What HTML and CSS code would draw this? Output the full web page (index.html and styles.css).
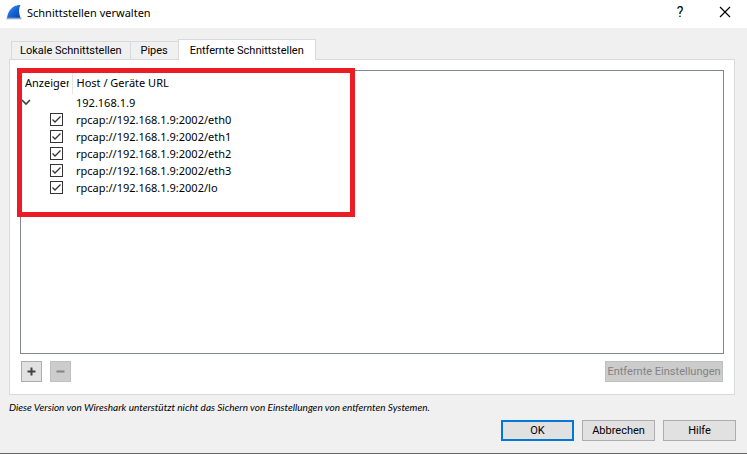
FILE: index.html
```html
<!DOCTYPE html>
<html lang="de">
<head>
  <meta charset="UTF-8">
  <title>Schnittstellen verwalten</title>
  <link rel="stylesheet" href="styles.css">
</head>
<body>
  <div class="dialog">
    <header class="titlebar">
      <svg class="logo" width="16" height="16" viewBox="0 0 16 16" aria-hidden="true">
        <defs>
          <linearGradient id="fin" x1="0" y1="0" x2="1" y2="1">
            <stop offset="0" stop-color="#5a9cf0"/>
            <stop offset="0.5" stop-color="#1766d8"/>
            <stop offset="1" stop-color="#0b3fa8"/>
          </linearGradient>
        </defs>
        <path d="M1 14C2 7 6 1 14.5 1C12.6 4 12.6 9 14.5 14Z" fill="url(#fin)"/>
        <path d="M0.5 14.5H15.5" stroke="#8fa9cf" stroke-width="1.6"/>
      </svg>
      <h1 class="title">Schnittstellen verwalten</h1>
      <button class="title-btn" type="button">?</button>
      <button class="title-btn" type="button" aria-label="Schließen">
        <svg width="12" height="12" viewBox="0 0 12 12"><path d="M1 1L11 11M11 1L1 11" stroke="#000" stroke-width="1.2"/></svg>
      </button>
    </header>

    <main class="content">
      <div class="tabs" role="tablist">
        <button class="tab" role="tab" type="button">Lokale Schnittstellen</button>
        <button class="tab" role="tab" type="button">Pipes</button>
        <button class="tab active" role="tab" type="button" aria-selected="true">Entfernte Schnittstellen</button>
      </div>

      <section class="panel">
        <div class="tree">
          <table class="interfaces">
            <thead>
              <tr><th class="show-col">Anzeigen</th><th>Host / Geräte URL</th></tr>
            </thead>
            <tbody>
              <tr>
                <td class="expand">
                  <button class="expand-btn" type="button" aria-label="Zuklappen">
                    <svg width="10" height="7" viewBox="0 0 10 7"><path d="M1 1L5 5L9 1" fill="none" stroke="#444" stroke-width="1.7"/></svg>
                  </button>
                </td>
                <td>192.168.1.9</td>
              </tr>
              <tr><td class="check"><input type="checkbox" id="eth0" checked></td><td><label for="eth0">rpcap://192.168.1.9:2002/eth0</label></td></tr>
              <tr><td class="check"><input type="checkbox" id="eth1" checked></td><td><label for="eth1">rpcap://192.168.1.9:2002/eth1</label></td></tr>
              <tr><td class="check"><input type="checkbox" id="eth2" checked></td><td><label for="eth2">rpcap://192.168.1.9:2002/eth2</label></td></tr>
              <tr><td class="check"><input type="checkbox" id="eth3" checked></td><td><label for="eth3">rpcap://192.168.1.9:2002/eth3</label></td></tr>
              <tr><td class="check"><input type="checkbox" id="lo" checked></td><td><label for="lo">rpcap://192.168.1.9:2002/lo</label></td></tr>
            </tbody>
          </table>
          <div class="highlight"></div>
        </div>

        <div class="panel-actions">
          <button class="btn icon-btn" type="button" aria-label="Hinzufügen">
            <svg width="9" height="9" viewBox="0 0 9 9"><path d="M0.5 4.5H8.5M4.5 0.5V8.5" stroke="#404040" stroke-width="2"/></svg>
          </button>
          <button class="btn icon-btn" type="button" aria-label="Entfernen" disabled>
            <svg width="9" height="9" viewBox="0 0 9 9"><path d="M0.5 4.5H8.5" stroke="#838383" stroke-width="2"/></svg>
          </button>
          <button class="btn remote-btn" type="button" disabled>Entfernte Einstellungen</button>
        </div>
      </section>

      <p class="note">Diese Version von Wireshark unterstützt nicht das Sichern von Einstellungen von entfernten Systemen.</p>
    </main>

    <footer class="dialog-actions">
      <button class="btn default" type="button">OK</button>
      <button class="btn" type="button">Abbrechen</button>
      <button class="btn" type="button">Hilfe</button>
    </footer>
  </div>
</body>
</html>
```

FILE: styles.css
```css
* {
  box-sizing: border-box;
}

body {
  margin: 0;
  font-family: Roboto, "Noto Sans", sans-serif;
  font-size: 11px;
  line-height: 17px;
  color: #000;
  background: #f0f0f0;
}

button {
  font: inherit;
  color: inherit;
}

.dialog {
  display: flex;
  flex-direction: column;
  min-height: 100vh;
  border-bottom: 1px solid #696969;
}

.titlebar {
  display: flex;
  align-items: center;
  height: 28px;
  padding: 0 16px 4px 6px;
  background: #fff;
}

.title {
  flex: 1;
  margin: 0 0 0 5px;
  font-family: "Noto Sans", sans-serif;
  font-size: 11px;
  font-weight: normal;
}

.title-btn {
  display: flex;
  align-items: center;
  justify-content: center;
  width: 12px;
  margin-left: 33px;
  padding: 0;
  border: none;
  background: none;
  font-size: 14px;
}

.content {
  flex: 1;
  display: flex;
  flex-direction: column;
  padding: 11px 12px 0 9px;
}

/* tabs */
.tabs {
  display: flex;
  align-items: flex-end;
  padding-left: 2px;
}

.tab {
  min-width: 48px;
  height: 18px;
  padding: 0 8px;
  border: 1px solid #d9d9d9;
  border-bottom: none;
  border-right: none;
  background: #f0f0f0;
}

.tab.active {
  position: relative;
  height: 21px;
  margin-bottom: -1px;
  padding: 0 11px;
  border-right: 1px solid #d9d9d9;
  background: #fff;
}

.panel {
  flex: 1;
  display: flex;
  flex-direction: column;
  padding: 10px 10px 12px;
  border: 1px solid #d9d9d9;
  background: #fff;
}

/* interface list */
.tree {
  position: relative;
  flex: 1;
  border: 1px solid #828790;
}

.interfaces {
  width: 100%;
  table-layout: fixed;
  border-collapse: collapse;
  font-family: "Noto Sans", sans-serif;
}

.interfaces th {
  height: 23px;
  padding: 0 4px;
  font-weight: normal;
  text-align: left;
  white-space: nowrap;
  overflow: hidden;
}

.interfaces .show-col {
  width: 51px;
  padding: 0 3px 0 4px;
  border-right: 1px solid #e5e5e5;
  overflow: clip;
  overflow-clip-margin: content-box;
}

.interfaces td {
  height: 17px;
  padding: 0 4px;
}

.interfaces .expand,
.interfaces .check {
  padding: 0;
}

.expand-btn {
  display: block;
  padding: 0;
  border: none;
  background: none;
  line-height: 0;
}

.check input {
  appearance: none;
  display: block;
  width: 13px;
  height: 13px;
  margin: 0 0 0 29px;
  border: 1px solid #333;
  background: #fff url("data:image/svg+xml,%3Csvg xmlns='http://www.w3.org/2000/svg' viewBox='0 0 11 11'%3E%3Cpath d='M1.5 5.5L4 8L9.5 2.5' fill='none' stroke='%23333' stroke-width='1.3'/%3E%3C/svg%3E");
}

.highlight {
  position: absolute;
  top: -3px;
  left: -4px;
  width: 338px;
  height: 149px;
  border: 5px solid #ed1c24;
  pointer-events: none;
}

/* buttons */
.btn {
  width: 73px;
  height: 21px;
  padding: 0;
  border: 1px solid #adadad;
  background: #e1e1e1;
  line-height: 19px;
  white-space: nowrap;
}

.btn:disabled {
  border-color: #bfbfbf;
  background: #ccc;
  color: #838383;
}

.btn.default {
  border: 2px solid #0078d7;
  line-height: 17px;
}

.panel-actions {
  display: flex;
  gap: 8px;
  margin-top: 7px;
  padding: 0 1px;
}

.btn.icon-btn {
  display: flex;
  align-items: center;
  justify-content: center;
  width: 21px;
}

.btn.remote-btn {
  width: 118px;
  margin-left: auto;
}

.note {
  margin: 4px 0;
  font-family: Lato, sans-serif;
  font-size: 10px;
  font-style: italic;
}

.dialog-actions {
  display: flex;
  justify-content: flex-end;
  gap: 8px;
  padding: 0 11px 12px;
}
```
